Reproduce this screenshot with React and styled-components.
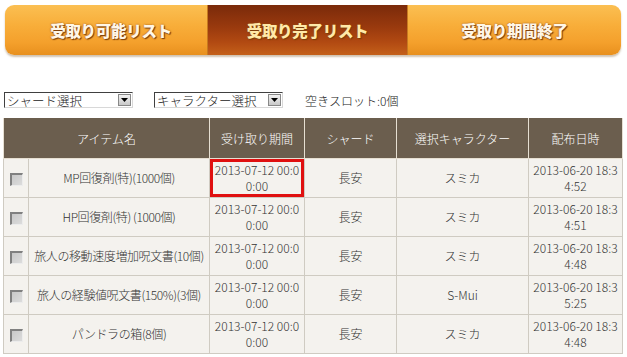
import React from 'react'
import styled, { createGlobalStyle } from 'styled-components'

const Global = createGlobalStyle`
body {
  margin: 0;
  background: #fff;
  font-family: "Noto Sans CJK JP", "DejaVu Sans", sans-serif;
  font-weight: 300;
}
`

const Page = styled.div`
width: 627px;
padding: 5px 0 0 3px;
box-sizing: border-box;
`

const TabBar = styled.div`
display: flex;
margin-left: 2px;
width: 616px;
height: 50px;
border-radius: 9px;
box-shadow: 0 2px 2px rgba(120, 80, 30, 0.35);
overflow: hidden;
`

const Tab = styled.div`
flex: 0 0 ${p => p.w}px;
display: flex;
align-items: center;
justify-content: center;
padding-left: ${p => p.pl || 0}px;
box-sizing: border-box;
font-size: 15.5px;
font-weight: 900;
letter-spacing: -0.3px;
color: ${p => (p.active ? '#ffe9a8' : '#fff6e6')};
text-shadow: 1px 1px 1px #7a3d0a, 0 0 2px #9a5010;
background: ${p =>
  p.active
    ? 'linear-gradient(180deg, #7a2a0a 0%, #9a3a0e 45%, #b24a12 75%, #c4601a 100%)'
    : 'linear-gradient(180deg, #fbbf52 0%, #f8ae3a 40%, #f4a02c 75%, #e8901e 100%)'};
border-right: ${p => (p.last ? 'none' : '1px solid #c77a20')};
`

const Controls = styled.div`
display: flex;
align-items: center;
margin-top: 37px;
height: 16px;
`

const Select = styled.div`
display: flex;
align-items: center;
justify-content: space-between;
width: ${p => p.w}px;
height: 16px;
box-sizing: border-box;
margin-left: ${p => p.ml}px;
border-top: 1px solid #404040;
border-left: 1px solid #404040;
border-right: 1px solid #d8d8d8;
border-bottom: 1px solid #d8d8d8;
background: #fff;
font-size: 12.5px;
color: #222;
padding-left: 2px;
`

const SelectButton = styled.span`
width: 13px;
height: 12px;
margin-right: 1px;
background: linear-gradient(180deg, #f2f2f2, #c8c8c8);
border: 1px solid #888;
box-sizing: border-box;
display: flex;
align-items: center;
justify-content: center;
`

const Slots = styled.span`
margin-left: 22px;
font-size: 12px;
color: #222;
`

const Table = styled.table`
margin-top: 10px;
width: 619px;
table-layout: fixed;
border-collapse: collapse;
font-size: 12px;
color: #333;
`

const Th = styled.th`
background: #6b5e4e;
color: #fff;
font-weight: 300;
height: 40px;
border: 1px solid #e6dfd2;
border-top: none;
padding: 0;
`

const Td = styled.td`
background: #f4f2ee;
border: 1px solid #cfcbc2;
height: 38px;
padding: 0;
text-align: center;
line-height: 16px;
white-space: ${p => (p.nowrap ? 'nowrap' : 'normal')};
letter-spacing: ${p => (p.nowrap ? '-0.4px' : '0')};
word-break: break-all;
position: relative;
`

const Highlight = styled.div`
position: absolute;
left: 0;
top: 0;
right: 0;
bottom: 0;
border: 3px solid #e01010;
pointer-events: none;
`

const Check = styled.span`
display: inline-block;
width: 13px;
height: 13px;
box-sizing: border-box;
border-top: 2px solid #808080;
border-left: 2px solid #808080;
border-right: 1px solid #ececec;
border-bottom: 1px solid #ececec;
background: linear-gradient(135deg, #c8c8c8, #dcdcdc);
vertical-align: middle;
`

const Arrow = () => (
  <svg width="7" height="4" viewBox="0 0 7 4">
    <polygon points="0,0 7,0 3.5,4" fill="#000" />
  </svg>
)

const rows = [
  { name: 'MP回復剤(特)(1000個)', char: 'スミカ', date: ['2013-06-20 18:3', '4:52'], hl: true },
  { name: 'HP回復剤(特) (1000個)', char: 'スミカ', date: ['2013-06-20 18:3', '4:51'] },
  { name: '旅人の移動速度増加呪文書(10個)', char: 'スミカ', date: ['2013-06-20 18:3', '4:48'] },
  { name: '旅人の経験値呪文書(150%)(3個)', char: 'S-Mui', date: ['2013-06-20 18:3', '5:25'] },
  { name: 'パンドラの箱(8個)', char: 'スミカ', date: ['2013-06-20 18:3', '4:48'] },
]

const App = () => {
  return (
    <Page>
      <Global />
      <TabBar>
        <Tab w={203} pl={10}>受取り可能リスト</Tab>
        <Tab w={200} active>受取り完了リスト</Tab>
        <Tab w={213} last>受取り期間終了</Tab>
      </TabBar>
      <Controls>
        <Select w={129} ml={1}>
          シャード選択
          <SelectButton><Arrow /></SelectButton>
        </Select>
        <Select w={129} ml={21}>
          キャラクター選択
          <SelectButton><Arrow /></SelectButton>
        </Select>
        <Slots>空きスロット:0個</Slots>
      </Controls>
      <Table>
        <colgroup>
          <col style={{ width: 25 }} />
          <col style={{ width: 181 }} />
          <col style={{ width: 95 }} />
          <col style={{ width: 92 }} />
          <col style={{ width: 132 }} />
          <col style={{ width: 94 }} />
        </colgroup>
        <thead>
          <tr>
            <Th colSpan={2}>アイテム名</Th>
            <Th>受け取り期間</Th>
            <Th>シャード</Th>
            <Th>選択キャラクター</Th>
            <Th>配布日時</Th>
          </tr>
        </thead>
        <tbody>
          {rows.map((r, i) => (
            <tr key={i}>
              <Td><Check /></Td>
              <Td nowrap>{r.name}</Td>
              <Td>
                2013-07-12 00:0<br />0:00
                {r.hl && <Highlight />}
              </Td>
              <Td>長安</Td>
              <Td>{r.char}</Td>
              <Td>{r.date[0]}<br />{r.date[1]}</Td>
            </tr>
          ))}
        </tbody>
      </Table>
    </Page>
  )
}

export default App
